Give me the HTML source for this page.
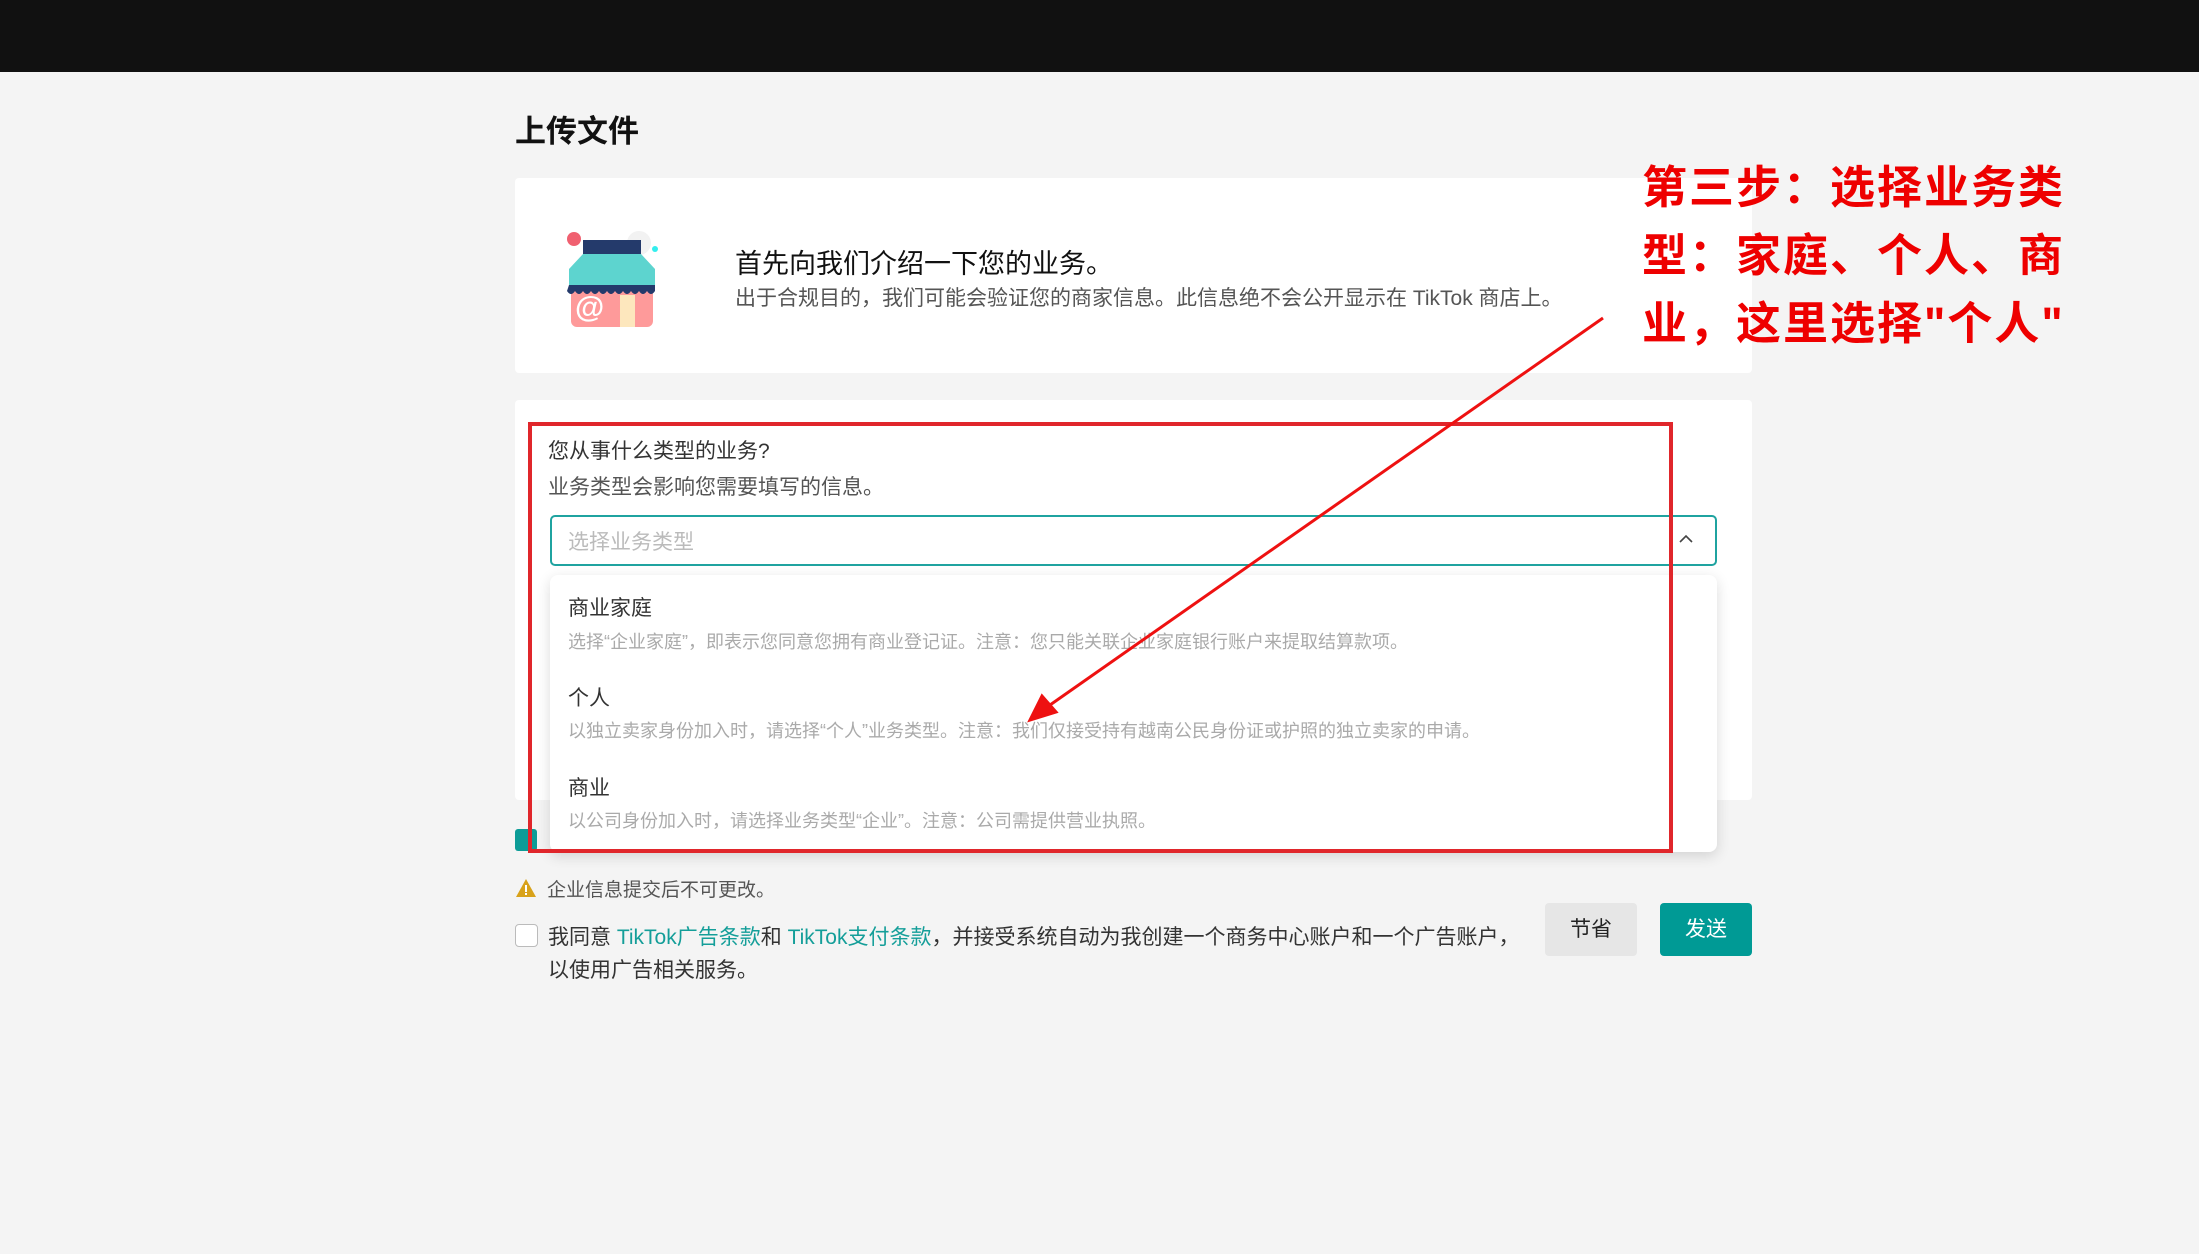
<!DOCTYPE html>
<html><head><meta charset="utf-8"><style>
*{margin:0;padding:0;box-sizing:border-box}
body{width:2199px;height:1254px;background:#f4f4f4;position:relative;overflow:hidden;font-family:"Liberation Sans","Noto Sans CJK SC",sans-serif;color:#222}
.a{position:absolute;white-space:nowrap}
</style></head><body>
<div class="a" style="left:0;top:0;width:2199px;height:72px;background:#111"></div>
<div class="a" style="left:515px;top:106px;font-size:31px;font-weight:bold;color:#111">上传文件</div>
<div class="a" style="left:515px;top:178px;width:1237px;height:195px;background:#fff;border-radius:4px"></div>
<svg class="a" style="left:561px;top:229px" width="104" height="98" viewBox="0 0 104 98">
<circle cx="78" cy="14" r="12" fill="#f2f2f2"/><circle cx="13" cy="10" r="7" fill="#f06070"/>
<circle cx="94" cy="20" r="3" fill="#3ee"/>
<rect x="10" y="44" width="82" height="54" rx="6" fill="#fe9a9a"/>
<rect x="22" y="11" width="58" height="14" fill="#243a6b"/>
<path d="M22 25 H80 L94 40 V56 H8 V40 Z" fill="#5dd4cf"/>
<path d="M8 56 H94 V62 q-4 6 -8 0 q-4 6 -8 0 q-4 6 -8 0 q-4 6 -8 0 q-4 6 -8 0 q-4 6 -8 0 q-4 6 -8 0 q-4 6 -8 0 q-4 6 -8 0 q-4 6 -8 0 q-4 6-8 0 Z" fill="#243a6b"/>
<rect x="59" y="66" width="15" height="32" fill="#fde7bd"/>
<text x="14" y="88" font-size="30" font-weight="bold" fill="#fff" font-family="Liberation Sans">@</text>
</svg>
<div class="a" style="left:735px;top:242px;font-size:27px;color:#111">首先向我们介绍一下您的业务。</div>
<div class="a" style="left:735px;top:282px;font-size:21px;color:#555">出于合规目的，我们可能会验证您的商家信息。此信息绝不会公开显示在 TikTok 商店上。</div>

<div class="a" style="left:515px;top:400px;width:1237px;height:400px;background:#fff;border-radius:4px"></div>
<div class="a" style="left:548px;top:435px;font-size:21px;color:#333">您从事什么类型的业务?</div>
<div class="a" style="left:548px;top:471px;font-size:21px;color:#555">业务类型会影响您需要填写的信息。</div>
<div class="a" style="left:550px;top:515px;width:1167px;height:51px;border:2px solid #1fa3a0;border-radius:5px"></div>
<div class="a" style="left:568px;top:526px;font-size:21px;color:#bbb">选择业务类型</div>
<svg class="a" style="left:1678px;top:532px" width="16" height="14"><path d="M2 10 L8 4 L14 10" stroke="#444" stroke-width="1.6" fill="none"/></svg>
<div class="a" style="left:515px;top:829px;width:22px;height:22px;background:#0c9c97;border-radius:3px"></div>
<div class="a" style="left:550px;top:575px;width:1167px;height:277px;background:#fff;border-radius:8px;box-shadow:0 4px 14px rgba(0,0,0,.14)"></div>
<div class="a" style="left:568px;top:592px;font-size:21px;color:#333">商业家庭</div>
<div class="a" style="left:568px;top:628px;font-size:18px;color:#aaa">选择“企业家庭”，即表示您同意您拥有商业登记证。注意：您只能关联企业家庭银行账户来提取结算款项。</div>
<div class="a" style="left:568px;top:682px;font-size:21px;color:#333">个人</div>
<div class="a" style="left:568px;top:717px;font-size:18px;color:#aaa">以独立卖家身份加入时，请选择“个人”业务类型。注意：我们仅接受持有越南公民身份证或护照的独立卖家的申请。</div>
<div class="a" style="left:568px;top:772px;font-size:21px;color:#333">商业</div>
<div class="a" style="left:568px;top:807px;font-size:18px;color:#aaa">以公司身份加入时，请选择业务类型“企业”。注意：公司需提供营业执照。</div>
<div class="a" style="left:528px;top:422px;width:1145px;height:431px;border:4px solid #e0262b"></div>

<svg class="a" style="left:515px;top:878px" width="22" height="20"><path d="M11 1 L21 19 H1 Z" fill="#d8a21a"/><rect x="10" y="7" width="2" height="7" fill="#fff"/><rect x="10" y="15" width="2" height="2" fill="#fff"/></svg>
<div class="a" style="left:547px;top:875px;font-size:19px;color:#555">企业信息提交后不可更改。</div>
<div class="a" style="left:515px;top:924px;width:23px;height:23px;border:1.5px solid #bbb;border-radius:4px;background:#fff"></div>
<div class="a" style="left:548px;top:921px;font-size:21px;color:#333">我同意 <span style="color:#149e99">TikTok广告条款</span>和 <span style="color:#149e99">TikTok支付条款</span>，并接受系统自动为我创建一个商务中心账户和一个广告账户，</div>
<div class="a" style="left:548px;top:954px;font-size:21px;color:#333">以使用广告相关服务。</div>
<div class="a" style="left:1545px;top:903px;width:92px;height:53px;background:#e6e6e6;border-radius:4px;font-size:21px;color:#222;text-align:center;line-height:53px">节省</div>
<div class="a" style="left:1660px;top:903px;width:92px;height:53px;background:#009a95;border-radius:4px;font-size:21px;color:#fff;text-align:center;line-height:53px">发送</div>

<div class="a" style="left:1642px;top:154px;font-size:45px;font-weight:bold;color:#ee0000;line-height:68px;white-space:normal;width:440px;letter-spacing:2px">第三步：选择业务类型：家庭、个人、商业，这里选择"个人"</div>
<svg class="a" style="left:0;top:0" width="2199" height="1254">
<line x1="1603" y1="318" x2="1040" y2="712" stroke="#ee1111" stroke-width="3"/>
<path d="M1030 720 L1042 696 L1056 712 Z" fill="#ee1111" stroke="#ee1111" stroke-width="3"/>
</svg>
</body></html>
